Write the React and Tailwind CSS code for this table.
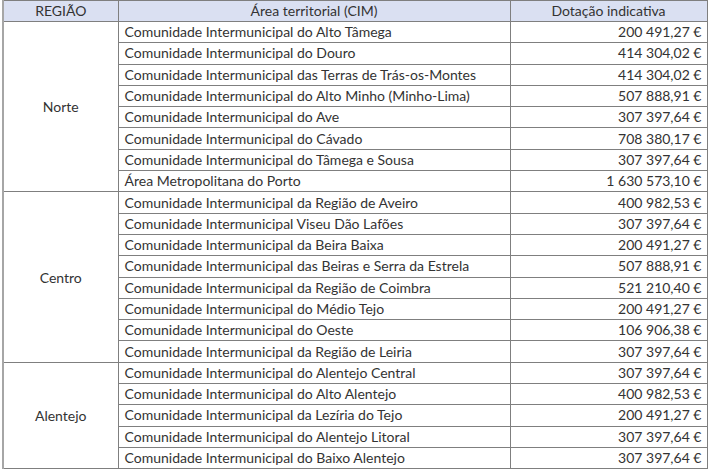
const data = [
  {
    region: "Norte",
    rows: [
      ["Comunidade Intermunicipal do Alto Tâmega", "200 491,27 €"],
      ["Comunidade Intermunicipal do Douro", "414 304,02 €"],
      ["Comunidade Intermunicipal das Terras de Trás-os-Montes", "414 304,02 €"],
      ["Comunidade Intermunicipal do Alto Minho (Minho-Lima)", "507 888,91 €"],
      ["Comunidade Intermunicipal do Ave", "307 397,64 €"],
      ["Comunidade Intermunicipal do Cávado", "708 380,17 €"],
      ["Comunidade Intermunicipal do Tâmega e Sousa", "307 397,64 €"],
      ["Área Metropolitana do Porto", "1 630 573,10 €"],
    ],
  },
  {
    region: "Centro",
    rows: [
      ["Comunidade Intermunicipal da Região de Aveiro", "400 982,53 €"],
      ["Comunidade Intermunicipal Viseu Dão Lafões", "307 397,64 €"],
      ["Comunidade Intermunicipal da Beira Baixa", "200 491,27 €"],
      ["Comunidade Intermunicipal das Beiras e Serra da Estrela", "507 888,91 €"],
      ["Comunidade Intermunicipal da Região de Coimbra", "521 210,40 €"],
      ["Comunidade Intermunicipal do Médio Tejo", "200 491,27 €"],
      ["Comunidade Intermunicipal do Oeste", "106 906,38 €"],
      ["Comunidade Intermunicipal da Região de Leiria", "307 397,64 €"],
    ],
  },
  {
    region: "Alentejo",
    rows: [
      ["Comunidade Intermunicipal do Alentejo Central", "307 397,64 €"],
      ["Comunidade Intermunicipal do Alto Alentejo", "400 982,53 €"],
      ["Comunidade Intermunicipal da Lezíria do Tejo", "200 491,27 €"],
      ["Comunidade Intermunicipal do Alentejo Litoral", "307 397,64 €"],
      ["Comunidade Intermunicipal do Baixo Alentejo", "307 397,64 €"],
    ],
  },
];

export default function App() {
  return (
    <div className="bg-white w-[709px] h-[471px] pl-[2px] font-['Lato',sans-serif] text-[14px] text-[#333333]">
      <table className="table-fixed border-collapse w-[704px] border-l-2 border-l-[#a6a6a6]">
        <colgroup>
          <col className="w-[115px]" />
          <col className="w-[392px]" />
          <col className="w-[197px]" />
        </colgroup>
        <thead>
          <tr className="h-[21px] bg-[#dae0f2]">
            <th className="border border-[#7f7f7f] font-normal text-center p-0 leading-none">REGIÃO</th>
            <th className="border border-[#7f7f7f] font-normal text-center p-0 leading-none">Área territorial (CIM)</th>
            <th className="border border-[#7f7f7f] font-normal text-center p-0 leading-none">Dotação indicativa</th>
          </tr>
        </thead>
        <tbody>
          {data.map((g) =>
            g.rows.map((r, i) => (
              <tr key={r[0]} className="h-[21.3px]">
                {i === 0 && (
                  <td rowSpan={g.rows.length} className="border border-[#7f7f7f] text-center p-0">
                    {g.region}
                  </td>
                )}
                <td className="border border-[#7f7f7f] pl-[6px] p-0 leading-none whitespace-nowrap">{r[0]}</td>
                <td className="border border-[#7f7f7f] pr-[5px] p-0 text-right leading-none">{r[1]}</td>
              </tr>
            ))
          )}
        </tbody>
      </table>
    </div>
  );
}
